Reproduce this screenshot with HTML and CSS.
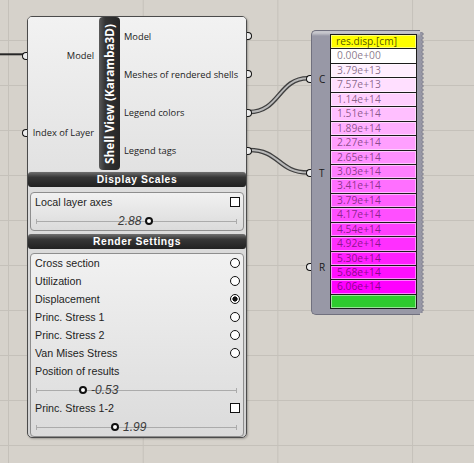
FILE: index.html
```html
<!DOCTYPE html>
<html>
<head>
<meta charset="utf-8">
<title>Shell View (Karamba3D)</title>
<link rel="stylesheet" href="styles.css">
</head>
<body>
<div class="canvas">
  <svg class="wires" width="474" height="463" viewBox="0 0 474 463">
    <path class="wire-single" d="M0 54.3 H24"/>
    <path class="wire-outer" d="M249 112 C 280 112, 278 78.3, 308 78.3"/>
    <path class="wire-inner" d="M249 112 C 280 112, 278 78.3, 308 78.3"/>
    <path class="wire-outer" d="M249 150 C 280 150, 278 172.5, 308 172.5"/>
    <path class="wire-inner" d="M249 150 C 280 150, 278 172.5, 308 172.5"/>
  </svg>

  <div class="shellview">
    <div class="comp-body">
      <div class="inputs">
        <div class="port"><span>Model</span><i class="grip grip-l"></i></div>
        <div class="port"><span>Index of Layer</span><i class="grip grip-l"></i></div>
      </div>
      <div class="title"><span>Shell View (Karamba3D)</span></div>
      <div class="outputs">
        <div class="port"><span>Model</span><i class="grip grip-r"></i></div>
        <div class="port"><span>Meshes of rendered shells</span><i class="grip grip-r"></i></div>
        <div class="port"><span>Legend colors</span><i class="grip grip-r"></i></div>
        <div class="port"><span>Legend tags</span><i class="grip grip-r"></i></div>
      </div>
    </div>

    <div class="section-head head-display">Display Scales</div>
    <div class="panel panel-display">
      <div class="row"><span>Local layer axes</span><i class="check"></i></div>
      <div class="slider">
        <i class="track"></i>
        <div class="thumb-group" style="margin-left:87px"><span class="val">2.88</span><i class="knob"></i></div>
      </div>
    </div>

    <div class="section-head head-render">Render Settings</div>
    <div class="panel panel-render">
      <div class="row"><span>Cross section</span><i class="radio"></i></div>
      <div class="row"><span>Utilization</span><i class="radio"></i></div>
      <div class="row"><span>Displacement</span><i class="radio on"></i></div>
      <div class="row"><span>Princ. Stress 1</span><i class="radio"></i></div>
      <div class="row"><span>Princ. Stress 2</span><i class="radio"></i></div>
      <div class="row"><span>Van Mises Stress</span><i class="radio"></i></div>
      <div class="row"><span>Position of results</span></div>
      <div class="slider">
        <i class="track"></i>
        <div class="thumb-group" style="margin-left:48px"><i class="knob"></i><span class="val">-0.53</span></div>
      </div>
      <div class="row"><span>Princ. Stress 1-2</span><i class="check"></i></div>
      <div class="slider">
        <i class="track"></i>
        <div class="thumb-group" style="margin-left:80px"><i class="knob"></i><span class="val">1.99</span></div>
      </div>
    </div>
  </div>

  <div class="legend">
    <div class="legend-body">
      <div class="legend-ports">
        <div class="lport">C<i class="grip grip-l"></i></div>
        <div class="lport">T<i class="grip grip-l"></i></div>
        <div class="lport">R<i class="grip grip-l"></i></div>
      </div>
      <div class="legend-list">
        <div class="lrow lhead">res.disp.[cm]</div>
        <div class="lrow" style="background:#ffffff">0.00e+00</div>
        <div class="lrow" style="background:#ffefff">3.79e+13</div>
        <div class="lrow" style="background:#ffdfff">7.57e+13</div>
        <div class="lrow" style="background:#ffcfff">1.14e+14</div>
        <div class="lrow" style="background:#ffbfff">1.51e+14</div>
        <div class="lrow" style="background:#ffafff">1.89e+14</div>
        <div class="lrow" style="background:#ff9fff">2.27e+14</div>
        <div class="lrow" style="background:#ff8fff">2.65e+14</div>
        <div class="lrow" style="background:#ff7fff">3.03e+14</div>
        <div class="lrow" style="background:#ff6fff">3.41e+14</div>
        <div class="lrow" style="background:#ff5fff">3.79e+14</div>
        <div class="lrow" style="background:#ff4fff">4.17e+14</div>
        <div class="lrow" style="background:#ff3fff">4.54e+14</div>
        <div class="lrow" style="background:#ff2fff">4.92e+14</div>
        <div class="lrow" style="background:#ff1fff">5.30e+14</div>
        <div class="lrow" style="background:#ff0fff">5.68e+14</div>
        <div class="lrow" style="background:#ff00ff">6.06e+14</div>
        <div class="lrow lgreen"></div>
      </div>
      <div class="legend-strip"></div>
    </div>
    <svg class="zig" width="6" height="285" viewBox="0 0 6 285">
      <defs>
        <pattern id="zz" width="6" height="4" patternUnits="userSpaceOnUse">
          <path d="M0 0 H3.5 L1.5 2 L3.5 4 H0 Z" fill="#9898a6"/>
          <path d="M3.5 0 L1.5 2 L3.5 4" fill="none" stroke="#6e6e7c" stroke-width="0.8"/>
        </pattern>
      </defs>
      <rect x="0" y="2" width="6" height="281" fill="url(#zz)"/>
    </svg>
  </div>
</div>
</body>
</html>
```

FILE: styles.css
```css
* { box-sizing: border-box; }
html, body { margin: 0; padding: 0; }
body {
  width: 474px;
  height: 463px;
  overflow: hidden;
  background: #d6d2cb;
  font-family: "Liberation Sans", Arial, sans-serif;
}
.canvas {
  position: relative;
  width: 474px;
  height: 463px;
  background-color: #d6d2cb;
  background-image:
    linear-gradient(to right, #c5c1ba 1px, transparent 1px),
    linear-gradient(to bottom, #c5c1ba 1px, transparent 1px);
  background-size: 134.7px 100%, 100% 45px;
  background-position: 8px 0, 0 40px;
}
.wires { position: absolute; left: 0; top: 0; }
.wire-single { fill: none; stroke: #262626; stroke-width: 2; }
.wire-outer { fill: none; stroke: #404040; stroke-width: 4.6; }
.wire-inner { fill: none; stroke: #b9b9b9; stroke-width: 2; }

/* ---------- Shell View component ---------- */
.shellview {
  position: absolute;
  left: 27px;
  top: 16px;
  width: 220px;
  height: 422px;
  border: 1px solid #4b4b4b;
  border-radius: 5px;
  background: linear-gradient(#e4e4e4, #d2d2d2);
  box-shadow: 1px 1px 2px rgba(0, 0, 0, 0.25);
  display: flex;
  flex-direction: column;
}
.comp-body {
  display: flex;
  height: 154px;
  background: linear-gradient(#f2f2f2, #e2e2e2);
  border-radius: 4px 4px 0 0;
}
.inputs {
  width: 71px;
  display: flex;
  flex-direction: column;
}
.port {
  flex: 1;
  position: relative;
  display: flex;
  align-items: center;
  font-family: "Open Sans", "DejaVu Sans", sans-serif;
  font-size: 9.3px;
  color: #222;
  white-space: nowrap;
}
.inputs .port { justify-content: flex-end; padding-right: 5px; }
.outputs { flex: 1; display: flex; flex-direction: column; padding-bottom: 1px; }
.outputs .port { padding-left: 4px; }
.title {
  width: 21px;
  margin: 0 0 1px;
  border-radius: 4px;
  background: linear-gradient(to right, #5a5a5a, #343434 30%, #262626);
  display: flex;
  align-items: center;
  justify-content: center;
}
.title span {
  writing-mode: vertical-rl;
  transform: rotate(180deg);
  color: #ffffff;
  font-family: "Open Sans", "DejaVu Sans", sans-serif;
  font-weight: 700;
  font-size: 11.8px;
  line-height: 1;
  white-space: nowrap;
}
.grip {
  position: absolute;
  top: 50%;
  width: 5px;
  height: 8px;
  margin-top: -4px;
  border: 1.5px solid #111;
  background: #ececec;
}
.grip-l { left: -6px; border-right: none; border-radius: 4px 0 0 4px; }
.grip-r { right: -6px; border-left: none; border-radius: 0 4px 4px 0; }

.section-head {
  height: 15px;
  margin: 0;
  border-radius: 3px;
  background: linear-gradient(#707070, #363636 35%, #212121);
  color: #fff;
  font-weight: 700;
  font-size: 10.3px;
  letter-spacing: 0.6px;
  line-height: 15px;
  text-align: center;
}
.head-display { margin-top: 1px; }
.head-render { margin-top: 3px; }

.panel {
  margin: 5px 2px 0 2px;
  border: 1px solid #8e8e8e;
  border-radius: 4px;
  background: linear-gradient(#f1f1f1, #dbdbdb);
  display: flex;
  flex-direction: column;
}
.panel-render { margin-top: 4px; }

.row {
  height: 18px;
  display: flex;
  align-items: center;
  justify-content: space-between;
  padding: 0 3px 0 4px;
  font-size: 10.7px;
  color: #1d1d1d;
  white-space: nowrap;
}
.radio {
  width: 10px;
  height: 10px;
  border: 1.5px solid #111;
  border-radius: 50%;
  background: #fff;
}
.radio.on { background: radial-gradient(circle, #111 0 2.3px, #fff 2.9px); }
.check {
  width: 10px;
  height: 10px;
  border: 1.5px solid #111;
  background: #fff;
}

.slider {
  position: relative;
  height: 19px;
  display: flex;
  align-items: center;
}
.track {
  position: absolute;
  left: 5px;
  right: 6px;
  top: 50%;
  height: 1px;
  background: #ababab;
}
.track::before, .track::after {
  content: "";
  position: absolute;
  top: -2px;
  width: 1px;
  height: 5px;
  background: #ababab;
}
.track::before { left: 0; }
.track::after { right: 0; }
.thumb-group {
  position: relative;
  display: flex;
  align-items: center;
  gap: 4px;
}
.knob {
  width: 8px;
  height: 8px;
  border: 2px solid #111;
  border-radius: 50%;
  background: #fff;
}
.val {
  font-style: italic;
  font-size: 12px;
  color: #3a3a3a;
  line-height: 1;
}

/* ---------- Legend component ---------- */
.legend {
  position: absolute;
  left: 311px;
  top: 30px;
  width: 115px;
  height: 285px;
  display: flex;
}
.legend-body {
  flex: 1;
  display: flex;
  align-items: flex-start;
  background: linear-gradient(#c6c6cc 0, #c6c6cc 2px, #9898a6 5px, #9898a6);
  border: 1px solid #70707e;
  border-right: none;
  border-radius: 5px 0 0 5px;
}
.legend-ports {
  width: 18px;
  height: 100%;
  display: flex;
  flex-direction: column;
  padding-top: 1px;
}
.lport {
  height: 94.5px;
  position: relative;
  display: flex;
  align-items: center;
  padding-left: 7px;
  font-family: "Open Sans", "DejaVu Sans", sans-serif;
  font-size: 10px;
  color: #1a1a1a;
}
.legend-list {
  width: 87px;
  margin-top: 3px;
  border: 1px solid #1c1c1c;
  border-bottom: none;
  display: flex;
  flex-direction: column;
}
.lrow {
  height: 14.45px;
  border-bottom: 1px solid #1c1c1c;
  box-shadow: inset 0 0 0 1px rgba(255, 255, 255, 0.5);
  padding-left: 6px;
  font-family: "Open Sans", "DejaVu Sans", sans-serif;
  font-size: 10.3px;
  line-height: 13.4px;
  color: rgba(40, 0, 40, 0.55);
  white-space: nowrap;
}
.lhead { background: #ffff00; color: rgba(40, 40, 0, 0.8); padding-left: 5px; font-size: 10.2px; }
.lgreen { background: #2ecb2e; }
.legend-strip { width: 3px; }
.zig { display: block; flex: none; }
```
